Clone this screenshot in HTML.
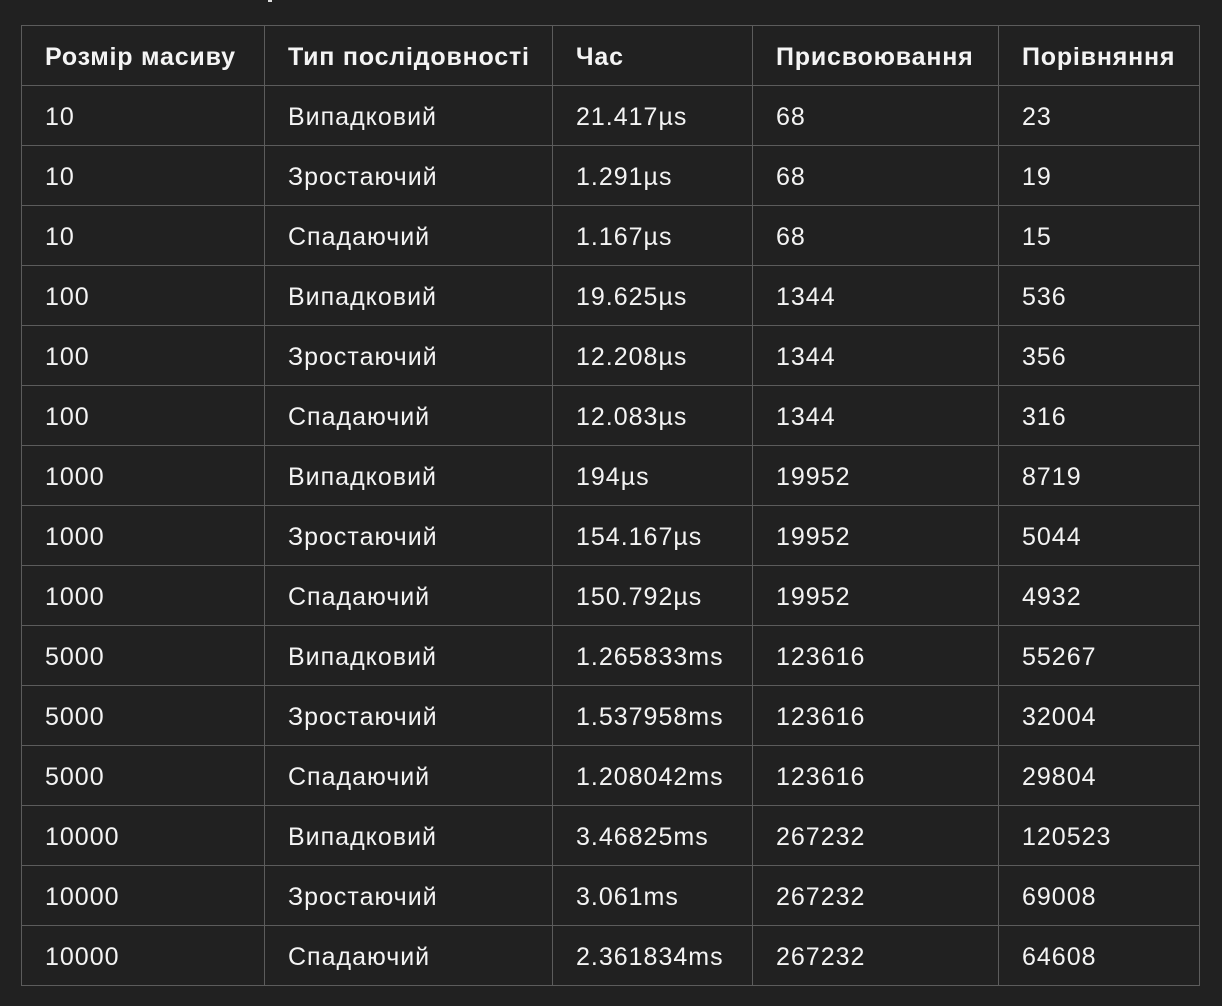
<!DOCTYPE html>
<html><head><meta charset="utf-8"><style>
html,body{margin:0;padding:0;background:#212121;width:1222px;height:1006px;overflow:hidden}
table{position:absolute;left:21px;top:25px;border-collapse:collapse;font-family:"Liberation Sans","DejaVu Sans",sans-serif;font-size:25px;letter-spacing:1px;color:#f4f4f4}
td,th{border:1.5px solid #5c5c5c;height:57px;padding:3px 0 0 23px;text-align:left;box-sizing:border-box;white-space:nowrap}
tr{height:60px}
th{font-weight:bold;letter-spacing:0.8px}
</style></head><body>
<div style="position:absolute;left:268px;top:0;width:4px;height:2px;background:#ddd"></div>
<table>
<colgroup><col style="width:243px"><col style="width:288px"><col style="width:200px"><col style="width:246px"><col style="width:201px"></colgroup>
<tr><th>Розмір масиву</th><th>Тип послідовності</th><th>Час</th><th>Присвоювання</th><th>Порівняння</th></tr>
<tr><td>10</td><td>Випадковий</td><td>21.417µs</td><td>68</td><td>23</td></tr>
<tr><td>10</td><td>Зростаючий</td><td>1.291µs</td><td>68</td><td>19</td></tr>
<tr><td>10</td><td>Спадаючий</td><td>1.167µs</td><td>68</td><td>15</td></tr>
<tr><td>100</td><td>Випадковий</td><td>19.625µs</td><td>1344</td><td>536</td></tr>
<tr><td>100</td><td>Зростаючий</td><td>12.208µs</td><td>1344</td><td>356</td></tr>
<tr><td>100</td><td>Спадаючий</td><td>12.083µs</td><td>1344</td><td>316</td></tr>
<tr><td>1000</td><td>Випадковий</td><td>194µs</td><td>19952</td><td>8719</td></tr>
<tr><td>1000</td><td>Зростаючий</td><td>154.167µs</td><td>19952</td><td>5044</td></tr>
<tr><td>1000</td><td>Спадаючий</td><td>150.792µs</td><td>19952</td><td>4932</td></tr>
<tr><td>5000</td><td>Випадковий</td><td>1.265833ms</td><td>123616</td><td>55267</td></tr>
<tr><td>5000</td><td>Зростаючий</td><td>1.537958ms</td><td>123616</td><td>32004</td></tr>
<tr><td>5000</td><td>Спадаючий</td><td>1.208042ms</td><td>123616</td><td>29804</td></tr>
<tr><td>10000</td><td>Випадковий</td><td>3.46825ms</td><td>267232</td><td>120523</td></tr>
<tr><td>10000</td><td>Зростаючий</td><td>3.061ms</td><td>267232</td><td>69008</td></tr>
<tr><td>10000</td><td>Спадаючий</td><td>2.361834ms</td><td>267232</td><td>64608</td></tr>
</table>
</body></html>
